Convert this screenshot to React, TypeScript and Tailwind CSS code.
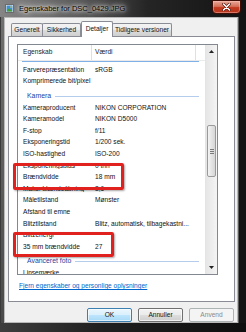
import React from "react";

type Row = { k: string; v?: string; group?: undefined } | { group: string; k?: undefined; v?: undefined };

const rows: Row[] = [
  { k: "Farverepræsentation", v: "sRGB" },
  { k: "Komprimerede bit/pixel" },
  { group: "Kamera" },
  { k: "Kameraproducent", v: "NIKON CORPORATION" },
  { k: "Kameramodel", v: "NIKON D5000" },
  { k: "F-stop", v: "f/11" },
  { k: "Eksponeringstid", v: "1/200 sek." },
  { k: "ISO-hastighed", v: "ISO-200" },
  { k: "Eksponeringsbias", v: "0 trin" },
  { k: "Brændvidde", v: "18 mm" },
  { k: "Maks. blændeåbning", v: "3,6" },
  { k: "Måletilstand", v: "Mønster" },
  { k: "Afstand til emne" },
  { k: "Blitztilstand", v: "Blitz, automatisk, tilbagekastni..." },
  { k: "Blitzenergi" },
  { k: "35 mm brændvidde", v: "27" },
  { group: "Avanceret foto" },
  { k: "Linsemærke" },
];

function PhotoIcon() {
  return (
    <svg width="9" height="9" viewBox="0 0 9 9">
      <rect x="0.5" y="0.5" width="8" height="8" fill="#f4f4f4" stroke="#6b6b6b" />
      <rect x="1.5" y="1.5" width="6" height="6" fill="#3d8fd6" />
      <path d="M1.5 7.5 L3.5 4.5 L5 6 L6 5 L7.5 7.5 Z" fill="#4a9a2c" />
      <circle cx="6" cy="3" r="0.8" fill="#f5d33a" />
    </svg>
  );
}

function CloseButton() {
  return (
    <div className="w-[29px] h-[14px] rounded-b-[4px] border border-[#3d0d06] bg-[linear-gradient(to_bottom,#e9a99a_0%,#d6705a_45%,#c23a1f_55%,#b8341c_100%)] flex items-center justify-center shadow-[inset_0_0_0_1px_rgba(255,200,190,0.45)]">
      <svg width="9" height="8" viewBox="0 0 9 8">
        <path d="M1.5 1 L7.5 7 M7.5 1 L1.5 7" stroke="#4a1208" strokeWidth="2.8" strokeLinecap="round" />
        <path d="M1.5 1 L7.5 7 M7.5 1 L1.5 7" stroke="#ffffff" strokeWidth="1.6" strokeLinecap="round" />
      </svg>
    </div>
  );
}

function Tab({ label, w, selected }: { label: string; w: string; selected?: boolean }) {
  if (selected) {
    return (
      <div
        className={`${w} h-[16px] -mt-[2px] -mb-[1px] relative z-10 bg-white border border-b-0 border-[#898c95] rounded-t-[2px] flex items-center justify-center`}
      >
        {label}
      </div>
    );
  }
  return (
    <div
      className={`${w} h-[13px] border border-b-0 border-[#898c95] rounded-t-[2px] bg-[linear-gradient(to_bottom,#f3f3f3,#ebebeb_50%,#dddddd_50%,#cfcfcf)] flex items-center justify-center -ml-px first:ml-0`}
    >
      {label}
    </div>
  );
}

function ScrollBar() {
  return (
    <div className="w-[12px] flex flex-col border-l border-[#e4e4e4] bg-[linear-gradient(to_right,#e6e6e6,#f4f4f4)]">
      <div className="h-[13px] flex items-center justify-center">
        <svg width="5" height="3" viewBox="0 0 5 3">
          <path d="M0 3 L2.5 0 L5 3 Z" fill="#222" />
        </svg>
      </div>
      <div className="mt-[67px] mx-[1px] h-[52px] rounded-[2px] border border-[#9a9a9a] bg-[linear-gradient(to_right,#f4f4f4,#e4e4e4_50%,#d6d6d6)] flex flex-col items-center justify-center gap-[1px]">
        <div className="w-[4px] h-px bg-[#7a7a7a]" />
        <div className="w-[4px] h-px bg-[#7a7a7a]" />
        <div className="w-[4px] h-px bg-[#7a7a7a]" />
      </div>
      <div className="flex-1" />
      <div className="h-[13px] flex items-center justify-center">
        <svg width="5" height="3" viewBox="0 0 5 3">
          <path d="M0 0 L2.5 3 L5 0 Z" fill="#222" />
        </svg>
      </div>
    </div>
  );
}

function ListView() {
  return (
    <div className="w-[201px] h-[231px] border border-[#828790] bg-white flex">
      <div className="flex-1 flex flex-col overflow-hidden">
        <div className="h-[16px] shrink-0 flex items-center text-[#1e1e1e] border-b border-[#eaeaea]">
          <div className="w-[74px] h-full pl-[5px] flex items-center border-r border-[#dde1e6]">Egenskab</div>
          <div className="w-[104px] h-full pl-[3px] flex items-center border-r border-[#dde1e6]">Værdi</div>
        </div>
        <div className="shrink-0 h-px ml-[4px] mr-[6px] bg-[#7fb0e6]" />
        <div className="shrink-0 h-[2px]" />
        {rows.map((r, i) =>
          r.group ? (
            <div key={i} className="shrink-0 h-[14.9px] pt-[3.2px]">
              <div className="h-[11.6px] flex items-center pl-[9px] pr-[6px] text-[#1f3f9e] text-[6.9px]">
                <span>{r.group}</span>
                <div className="flex-1 h-px ml-[4px] bg-[#b4cdec]" />
              </div>
            </div>
          ) : (
            <div key={i} className="shrink-0 h-[11.6px] flex items-center text-[#111]">
              <div className="w-[74px] pl-[5px] whitespace-nowrap overflow-hidden">{r.k}</div>
              <div className="pl-[3px] whitespace-nowrap">{r.v ?? ""}</div>
            </div>
          )
        )}
      </div>
      <ScrollBar />
    </div>
  );
}

function Button({ label, variant }: { label: string; variant: "default" | "normal" | "disabled" }) {
  const cls =
    variant === "default"
      ? "border-[#3c7fb1] bg-[linear-gradient(to_bottom,#eaf6fd,#d9f0fc_50%,#bee6fd_50%,#a7d9f5)] text-[#111] shadow-[inset_0_0_0_1px_rgba(255,255,255,0.6)]"
      : variant === "normal"
      ? "border-[#707070] bg-[linear-gradient(to_bottom,#f2f2f2,#ebebeb_50%,#dddddd_50%,#cfcfcf)] text-[#111] shadow-[inset_0_0_0_1px_rgba(255,255,255,0.7)]"
      : "border-[#adb2b5] bg-[#f4f4f4] text-[#8a8a8a]";
  return (
    <div className={`w-[45px] h-[14px] rounded-[2px] border flex items-center justify-center ${cls}`}>{label}</div>
  );
}

export default function App() {
  return (
    <div className="relative w-[246px] h-[332px] overflow-hidden flex flex-col font-['Liberation_Sans',Arial,sans-serif] text-[6.6px] leading-none bg-[linear-gradient(to_right,#858585_0%,#5c5c5c_30%,#252525_60%,#131313_100%)]">
      {/* Title bar */}
      <div className="h-[17px] shrink-0 flex items-start">
        <div className="ml-[5px] mt-[4px]">
          <PhotoIcon />
        </div>
        <div className="ml-[5px] mt-[5px] text-[7.5px] text-black [text-shadow:0_0_3px_#ffffff,0_0_6px_#ffffff,0_0_9px_rgba(255,255,255,0.8)]">
          Egenskaber for DSC_0429.JPG
        </div>
        <div className="ml-auto mr-[5px]">
          <CloseButton />
        </div>
      </div>

      {/* Middle */}
      <div className="flex-1 flex">
        <div className="w-[4px] bg-[linear-gradient(to_bottom,#6f6f6f,#4a4a4a)] border-l border-[#3a3a3a]" />
        <div className="w-[234px] bg-[#f0f0f0] border border-[#b9b9b9] flex flex-col pl-[3px] pr-[2px]">
          {/* Tabs */}
          <div className="mt-[5px] ml-[3px] flex items-end h-[13px] text-[#111]">
            <Tab label="Generelt" w="w-[32px]" />
            <Tab label="Sikkerhed" w="w-[39px]" />
            <Tab label="Detaljer" w="w-[32px]" selected />
            <Tab label="Tidligere versioner" w="w-[60px]" />
          </div>
          {/* Panel */}
          <div className="w-[227px] h-[266px] bg-white border border-[#898c95] pl-[8px] pt-[7px] flex flex-col">
            <ListView />
            <div className="mt-[8px] ml-[2px] text-[#0066cc] underline whitespace-nowrap">
              Fjern egenskaber og personlige oplysninger
            </div>
          </div>
          {/* Buttons */}
          <div className="mt-[6px] flex justify-end gap-[6px] pr-[1px]">
            <Button label="OK" variant="default" />
            <Button label="Annuller" variant="normal" />
            <Button label="Anvend" variant="disabled" />
          </div>
        </div>
        <div className="w-[8px] bg-[#141414] border-l border-[#5a5a5a]" />
      </div>
      <div className="h-[9px] shrink-0 bg-[linear-gradient(to_right,#3e3e3e,#202020_40%,#0e0e0e)]" />

      {/* Annotation boxes */}
      <div className="absolute left-[13px] top-[163px] w-[111px] h-[27px] border-[3px] border-[#e0211d] rounded-[2px] shadow-[1px_1px_2px_rgba(0,0,0,0.35)]" />
      <div className="absolute left-[13px] top-[232px] w-[101px] h-[25px] border-[3px] border-[#e0211d] rounded-[2px] shadow-[1px_1px_2px_rgba(0,0,0,0.35)]" />
    </div>
  );
}
